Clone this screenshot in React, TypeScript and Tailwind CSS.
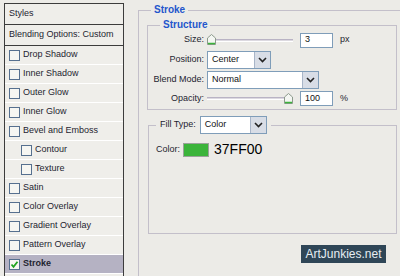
import React from "react";

const font = { fontFamily: "'Liberation Sans', Arial, sans-serif" };

const styleRows: { label: string; indent?: boolean; checked?: boolean; active?: boolean }[] = [
  { label: "Drop Shadow" },
  { label: "Inner Shadow" },
  { label: "Outer Glow" },
  { label: "Inner Glow" },
  { label: "Bevel and Emboss" },
  { label: "Contour", indent: true },
  { label: "Texture", indent: true },
  { label: "Satin" },
  { label: "Color Overlay" },
  { label: "Gradient Overlay" },
  { label: "Pattern Overlay" },
  { label: "Stroke", checked: true, active: true },
];

function Checkbox({ checked }: { checked?: boolean }) {
  return (
    <span className="flex items-center justify-center w-[11px] h-[11px] border border-[#56708f] bg-[#f6f6f2] shrink-0">
      {checked && (
        <svg width="9" height="9" viewBox="0 0 9 9">
          <path d="M1.5 4.5 L3.5 6.8 L7.5 1.8" fill="none" stroke="#1fa31f" strokeWidth="1.8" />
        </svg>
      )}
    </span>
  );
}

function SliderThumb() {
  return (
    <svg width="9" height="11" viewBox="0 0 9 11" className="shrink-0">
      <path d="M0.5 10.5 V4 L4.5 0.5 L8.5 4 V10.5 Z" fill="#f4f6f2" stroke="#8c9a8c" />
      <path d="M1 9.5 H8" stroke="#3cb33c" strokeWidth="1.5" />
    </svg>
  );
}

function Slider({ thumbAt }: { thumbAt: "start" | "end" }) {
  return (
    <div className="relative flex items-center w-[86px] h-[12px] shrink-0">
      <div className="w-full h-[3px] border-t border-[#b9b3c4] border-b border-b-white bg-[#dcd9e0]" />
      <div className={`absolute top-0 ${thumbAt === "start" ? "left-0" : "right-0"}`}>
        <SliderThumb />
      </div>
    </div>
  );
}

function Select({ value, width }: { value: string; width: string }) {
  return (
    <div className={`flex items-stretch h-[18px] border border-[#7f9db9] bg-white shrink-0 ${width}`}>
      <div className="flex-1 flex items-center pl-[4px] text-[9px] text-[#111]">{value}</div>
      <div className="w-[16px] flex items-center justify-center bg-[#d8dde6] border-l border-[#a8b5c8]">
        <svg width="9" height="6" viewBox="0 0 9 6">
          <path d="M1 1 L4.5 4.5 L8 1" fill="none" stroke="#222" strokeWidth="1.6" />
        </svg>
      </div>
    </div>
  );
}

function NumberField({ value }: { value: string }) {
  return (
    <div className="w-[33px] h-[15px] border border-[#7f9db9] bg-white flex items-center pl-[4px] text-[9px] text-[#111] shrink-0">
      {value}
    </div>
  );
}

export default function App() {
  return (
    <div className="w-[400px] h-[276px] overflow-hidden bg-[#ecebe7] flex" style={font}>
      {/* Styles list */}
      <div className="ml-[4px] mt-[3px] w-[120px] shrink-0 h-[280px] border-t border-x border-[#3c3c3c] bg-[#efeeea] flex flex-col text-[9px] text-[#1e2430]">
        <div className="h-[21px] flex items-center pl-[4px] border-b border-[#3c3c3c]">Styles</div>
        <div className="h-[21px] flex items-center pl-[4px] border-b border-[#3c3c3c]">Blending Options: Custom</div>
        {styleRows.map((r) => (
          <div
            key={r.label}
            className={`h-[19px] flex items-center gap-[3px] border-b border-white ${r.indent ? "pl-[16px]" : "pl-[4px]"} ${
              r.active ? "bg-[#b5b2c3] font-bold" : ""
            }`}
          >
            <Checkbox checked={r.checked} />
            <span>{r.label}</span>
          </div>
        ))}
      </div>

      {/* Stroke settings */}
      <div className="ml-[14px] mt-[3px] flex flex-col shrink-0">
        <fieldset className="w-[290px] h-[300px] border-l border-t border-[#c3bfca] pl-[8px] pt-[1px]">
          <legend className="ml-[4px] px-[3px] text-[10px] font-bold text-[#2356cc] leading-[14px]">Stroke</legend>

          <fieldset className="w-[250px] h-[92px] border border-[#c3bfca]">
            <legend className="ml-[12px] px-[3px] text-[10px] font-bold text-[#2356cc] leading-[14px]">Structure</legend>
            <div className="grid grid-cols-[56px_1fr] gap-x-[3px] text-[9px] text-[#1e2430] mt-[-1px]">
              <div className="h-[18px] flex items-center justify-end">Size:</div>
              <div className="h-[18px] flex items-center gap-[7px]">
                <Slider thumbAt="start" />
                <NumberField value="3" />
                <span>px</span>
              </div>
              <div className="h-[21px] flex items-center justify-end">Position:</div>
              <div className="h-[21px] flex items-center">
                <Select value="Center" width="w-[64px]" />
              </div>
              <div className="h-[20px] flex items-center justify-end">Blend Mode:</div>
              <div className="h-[20px] flex items-center">
                <Select value="Normal" width="w-[112px]" />
              </div>
              <div className="h-[17px] flex items-center justify-end">Opacity:</div>
              <div className="h-[17px] flex items-center gap-[7px]">
                <Slider thumbAt="end" />
                <NumberField value="100" />
                <span>%</span>
              </div>
            </div>
          </fieldset>

          <fieldset className="mt-[6px] ml-[1px] w-[249px] h-[118px] border border-[#c3bfca]">
            <legend className="ml-[7px] px-[4px] flex items-center gap-[4px] text-[9px] text-[#1e2430]">
              <span>Fill Type:</span>
              <Select value="Color" width="w-[67px]" />
            </legend>
            <div className="flex items-center gap-[3px] pl-[7px] mt-[5px] text-[9px] text-[#1e2430]">
              <span>Color:</span>
              <span className="w-[26px] h-[14px] bg-[#3bb43a] border border-[#9aa29a]" />
              <span className="ml-[2px] text-[14px] text-black">37FF00</span>
            </div>
          </fieldset>

          <div className="flex justify-end mt-[11px] w-[249px] pr-[10px]">
            <div className="w-[85px] h-[18px] bg-[#2f4657] text-[#e6edf2] text-[12px] flex items-center justify-center">
              ArtJunkies.net
            </div>
          </div>
        </fieldset>
      </div>
    </div>
  );
}
